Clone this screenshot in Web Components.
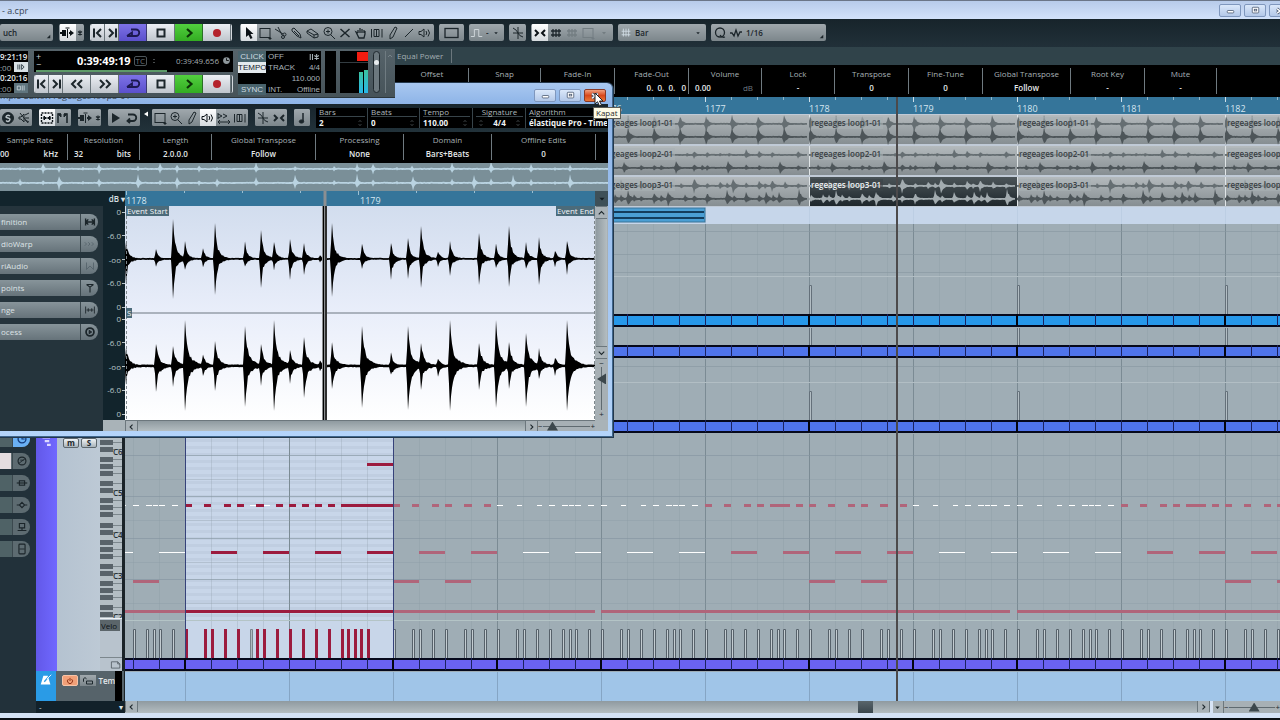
<!DOCTYPE html>
<html lang="en">
<head>
<meta charset="utf-8">
<meta name="viewport" content="width=device-width, initial-scale=1">
<title>a.cpr</title>
<style>
  html, body { margin: 0; height: 100%; }
  body {
    font: 8px/12px "Open Sans", "Noto Sans", sans-serif;
    color: #c9d2d6;
    background: #0c1418;
    overflow: hidden;
  }
</style>
</head>
<body>
<project-window></project-window>

<script>
/* Icons on a 16 x 16 grid, drawn with currentColor */
const ICONS = {
  prev: '<path d="M4 3.500v9M11 4L7 8l4 4" stroke-width="2"/>',
  next: '<path d="M12 3.500v9M5 4l4 4-4 4" stroke-width="2"/>',
  rew: '<path d="M7 4L3 8l4 4M13 4L9 8l4 4" stroke-width="2"/>',
  fwd: '<path d="M3 4l4 4-4 4M9 4l4 4-4 4" stroke-width="2"/>',
  cycle: '<path d="M6 4.500h5a3.200 3.200 0 0 1 0 6.500H2M2 11l5-3.500V11" stroke-width="1.800"/>',
  stop: '<path d="M4.500 4.500h7v7h-7z" stroke-width="2"/>',
  play: '<path d="M6 4l4.500 4L6 12" stroke-width="2.200"/>',
  rec: '<circle cx="8" cy="8" r="4" fill="#b4232c" stroke="none"/>',
  follow: '<path d="M0 8h5M9 8h3" stroke-width="2"/><path d="M2 5h4v6H2zM10 5l4 3-4 3z" fill="currentColor" stroke="none"/><path d="M7.500 4v9M5.500 3h4"/>',
  star: '<path d="M8 5.500v5M6 6.500l4 3M10 6.500l-4 3" stroke-width="1.200"/>',
  arrow: '<path d="M5 2v10l2.500-2 2 4 2-1-2-4h3z" fill="currentColor" stroke="none"/>',
  range: '<rect x="3" y="3.500" width="10" height="9"/><path d="M12 13h2v1h-2z" fill="currentColor"/>',
  split: '<path d="M2 4l8 5M5 2l4 8"/><circle cx="11.500" cy="9.500" r="1.500"/><circle cx="10" cy="12" r="1.500"/>',
  glue: '<path d="M3 4l2-1 6 6 1 4-4-2-5-5z"/><path d="M5 6l5 5"/>',
  erase: '<path d="M2 6l4-2 7 5v3l-4 1-7-5z"/><path d="M2 6l7 4 4-1M9 10v3"/>',
  zoom: '<circle cx="7" cy="6.500" r="4"/><path d="M5 6.500h4M7 4.500v4M10 10l4 4"/>',
  mute: '<path d="M3.500 4l9 8M12.500 4l-9 8" stroke-width="1.500"/>',
  hand: '<path d="M5 8V5M7 8V3M9 8V4M11 8V5M5 8L3 7l3 6h5l1-4V6" stroke-width="1.300"/>',
  warp: '<path d="M2.500 4v8.500M13 4v8.500M5 4.500h5v7H5zM7.500 4v8"/>',
  draw: '<path d="M5 10l5-8 2 1-4 9-3 2z"/>',
  line: '<path d="M4 12l8-8"/>',
  speaker: '<path d="M2 6.500h2L7 4v8L4 9.500H2zM9 6q1.500 2 0 4M11 4.500q3 3.500 0 7"/>',
  box: '<rect x="1" y="3.500" width="13" height="9" stroke-width="1.300"/>',
  step: '<path d="M1 12h4V4h5v8h4" stroke="#d6dde0"/>',
  xfade: '<path d="M3 3q4 2 5 5t5 4M3 8h10M8 2v12"/>',
  snap: '<path d="M3 5l3 3-3 3M13 5l-3 3 3 3M5 8h1M10 8h1" stroke-width="2"/>',
  grid: '<path d="M5 4v8M8 4v8M11 4v8M3 6h10M3 10h10" stroke-width="1.300"/>',
  gridlight: '<path d="M5 3v9M8 3v9M11 3v9M3 6h10M3 10h10" stroke="#d0dbe4"/>',
  down: '<path d="M6 7h4l-2 2.500z" fill="currentColor" stroke="none"/>',
  corner: '<path d="M10 14h4v-4z" fill="currentColor" stroke="none"/>',
  quant: '<circle cx="8" cy="7.500" r="4.500" stroke-width="1.300"/><path d="M8 10q2 3 5 2" stroke-width="1.300"/>',
  zigzag: '<path d="M2 8h2l2 3 2-6 2 6 2-4h2" stroke-width="1.300"/>',
  solo: '<circle cx="8" cy="8" r="5.500" fill="currentColor"/><path d="M10 6q-2-1.500-3.500 0t1.500 2 1.500 2.500-3.500 0" stroke="#b9c2c7" stroke-width="1.400"/>',
  nospeak: '<path d="M3 7h2l3-3v8L5 9H3zM9 5l4-2M9 8h4M9 10l4 2M4 3l8 10"/>',
  selrange: '<rect x="2.500" y="3" width="11" height="10" stroke-dasharray="2 1" stroke-width="1.400"/><path d="M5 6v4l2-2zM11 6v4L9 8zM4 8h8" fill="currentColor"/>',
  flags: '<path d="M3 13V4h3M12 13V4H9" stroke-width="1.600"/><path d="M3 4h3v3zM12 4H9v3z" fill="currentColor"/>',
  tri: '<path d="M4 3l8 5-8 5z" fill="currentColor" stroke="none"/>',
  loop: '<path d="M4 4.500h5a3.200 3.200 0 0 1 0 6.500H4M6 8.500L3.500 11 6 13" stroke-width="1.800"/>',
  scrub: '<path d="M2 3v6M2 4l4 2-4 2M7 4l4 2-4 2M2 12h12M4 10l-2 2 2 2M12 10l2 2-2 2"/>',
  note: '<path d="M9 3v8" stroke-width="1.500"/><ellipse cx="7.500" cy="11.500" rx="2.200" ry="1.600" fill="currentColor"/>',
  definition: '<path d="M3 4v8M13 4v8M3 8h10M6 5L3.500 8 6 11M10 5l2.500 3L10 11" stroke-width="1.600"/>',
  chevs: '<path d="M2 6l2 2-2 2M6 6l2 2-2 2M10 6l2 2-2 2"/>',
  vari: '<path d="M4 4v8l4-4 4 4V4"/>',
  hitp: '<path d="M4 4l4 3 4-3M4 4h8M8 7v6" stroke-width="1.300"/>',
  ranges: '<path d="M3 4v8M13 4v8M4 8h8M6 6v4M10 6v4"/>',
  process: '<circle cx="8" cy="8" r="4.500" stroke-width="2"/><path d="M7 6l3 2-3 2z" fill="currentColor"/>',
  eq: '<circle cx="8" cy="8" r="4.500" stroke-width="1.300"/><path d="M4 11l8-6M6 7h4"/>',
  inserts: '<path d="M2 8h12" stroke-width="1.300"/><rect x="5" y="5.500" width="6" height="5" stroke-width="1.300"/>',
  sends: '<path d="M2 8h3M11 8h3M8 5l3 3-3 3-3-3z" stroke-width="1.300"/>',
  fader: '<path d="M5 4h6v5H5zM3 12h10M8 9v3" stroke-width="1.300"/>',
  strip: '<rect x="4.500" y="2.500" width="7" height="11" rx="1" stroke-width="1.300"/><path d="M5 8h6"/>',
  dial: '<circle cx="8" cy="8" r="4.500" stroke-width="1.500"/><path d="M8 5v3h3" stroke-width="1.300"/>',
  min: '<rect x="4" y="8" width="8" height="3" rx="1" fill="#fff"/>',
  max: '<rect x="4" y="4" width="8" height="7" rx="1" fill="#fff"/><rect x="6.500" y="6.500" width="3" height="2"/>',
  close: '<path d="M4 5l8 6M12 5l-8 6" stroke-width="4"/><path d="M4 5l8 6M12 5l-8 6" stroke="#fff" stroke-width="2"/>',
  left: '<path d="M9.500 4.500L6 8l3.500 3.500" stroke-width="1.600"/>',
  right: '<path d="M6.500 4.500L10 8l-3.500 3.500" stroke-width="1.600"/>',
  up: '<path d="M4 10l4-4 4 4" stroke-width="1.600"/>',
  dn: '<path d="M4 6l4 4 4-4" stroke-width="1.600"/>',
  drop: '<path d="M4 6h8l-4 4.500z" fill="currentColor" stroke="none"/>',
  back: '<path d="M12 3v10L4 8z" fill="currentColor" stroke="none"/>',
  spin: '<path d="M6 6l2-2 2 2M6 10l2 2 2-2"/>',
  clock: '<circle cx="8" cy="8" r="6" fill="currentColor" stroke="none"/><path d="M8 4v4h4" stroke="#000" stroke-width="1.500"/>',
  power: '<path d="M5.500 5a4 4 0 1 0 5 0M8 3v5" stroke-width="1.500"/>',
  unlock: '<path d="M2 9V5q2-3 4 0M6 8h8v4H6z" stroke-width="1.300"/>',
  metro: '<path d="M5 3h5l3 10H2z" fill="#fff" stroke="none"/><path d="M6 10L13 2" stroke="#2a9be6" stroke-width="1.500"/><path d="M9 7l5-5" stroke="#fff"/>',
  punchin: '<path d="M3 4v8M6 4v8M9 4l4 4-4 4z" stroke-width="1.300"/>',
  punchout: '<path d="M2 5h5v6H2zM10 4v8M13 4v8" stroke-width="1.300"/>',
  count: '<path d="M3 4v8M6 4v8M11.500 4v8M8.500 6l6 4M14.500 6l-6 4" stroke-width="1.400"/>',
  lane: '<path d="M2 3h10M5 8h6M8 13h5" stroke="#dcd9ff" stroke-width="3"/>',
  page: '<path d="M2 4h9l3 3v6H2zM11 4v3h3"/>'
};

const icon = (name, size = 14) =>
  `<svg width="${size}" height="${size}" viewBox="0 0 16 16" fill="none" stroke="currentColor" aria-hidden="true">${ICONS[name] || ''}</svg>`;

/* Timeline scale: the lanes run from two beats before FIRST_BAR to the window's edge */
const BAR = 104;
const BEAT = 26;
const FIRST_BAR = 1172;
const LAST_BAR = FIRST_BAR + Math.ceil((window.innerWidth - 185) / BAR);
const FIRST_EVENT = 1176;
const barX = n => 60 + (n - FIRST_BAR) * BAR;

/* Closed outline of a wave: hits are [x, up, down] with a short attack and a tail */
function wavePath(hits, width, mid, spike, body, floor) {
  const top = [];
  const low = [];
  let seed = 7;
  for (let x = 0; x <= width; x++) {
    let up = floor;
    let down = floor;
    for (const [hx, u, d = u] of hits) {
      const dist = x - hx;
      if (dist < -1) continue;
      const env = dist < 0 ? .4 : .66 * Math.exp(-dist / spike) + .34 * Math.exp(-dist / body);
      up = Math.max(up, u * env);
      down = Math.max(down, d * env);
    }
    seed = (seed * 1103515245 + 12345) % 2147483648;
    const jitter = .8 + .4 * seed / 2147483648;
    top.push(`${x},${(mid - up * (up > 15 ? 1 : jitter)).toFixed(1)}`);
    low.unshift(`${x},${(mid + down * (down > 15 ? 1 : 1.8 - jitter)).toFixed(1)}`);
  }
  return `M${top.join('L')}L${low.join('L')}Z`;
}

class UiElement extends HTMLElement {
  connectedCallback() {
    if (this.shadowRoot) return;
    const root = this.attachShadow({ mode: 'open' });
    root.innerHTML = `<style>${this.css()}</style>${this.html()}`;
  }
  attr(name, fallback = '') { return this.getAttribute(name) ?? fallback; }
}

/* Push button with an icon; the tone sets its colours */
class ToolButton extends UiElement {
  css() {
    const w = this.attr('w', '16');
    return `
      :host { display: flex; width: ${w}px; color: #1c262b; }
      button {
        all: unset; box-sizing: border-box; flex: 1; min-width: 0;
        display: flex; align-items: center; justify-content: center;
        background: linear-gradient(#a0a8ad, #7c868b);
        overflow: hidden; white-space: nowrap;
      }
      svg { flex: none; }
      :host([tone=white]) button { background: linear-gradient(#fff, #d5dade); color: #0c1216; }
      :host([tone=light]) button { background: linear-gradient(#eceff4, #bfc5cc); border-right: 1px solid #69747a; }
      :host([tone=violet]) button { background: linear-gradient(#7d72e6, #5b50cc); color: #1c1850; border-right: 1px solid #3c3a70; }
      :host([tone=green]) button { background: linear-gradient(#52cf3f, #33ac22); color: #0c3407; border-right: 1px solid #2a6f25; }
      :host([tone=dim]) button { color: #737d82; }
      :host([tone=orange]) button { background: #f2a078; color: #8c2d10; border: 1px solid #f7c4a8; border-radius: 2px; }
      :host([tone=key]) button { background: linear-gradient(#f1f4f6, #a9b3ba); border: 1px solid #5d676d; border-radius: 2px; font-weight: 700; }
    `;
  }
  html() {
    return `<button type="button" aria-label="${this.attr('label')}">${this.hasAttribute('icon') ? icon(this.attr('icon'), this.attr('size', '16')) : ''}<slot></slot></button>`;
  }
}
customElements.define('tool-button', ToolButton);

class ToolGroup extends UiElement {
  css() {
    return `
      :host {
        display: flex; flex: none; box-sizing: border-box; height: 17px; padding: 0 1px;
        border-radius: 2px; overflow: hidden;
        background: linear-gradient(#a0a8ad, #7c868b);
      }
    `;
  }
  html() { return '<slot></slot>'; }
}
customElements.define('tool-group', ToolGroup);

/* Drop-down in the toolbar */
class ToolSelect extends UiElement {
  css() {
    return `
      :host { display: flex; align-items: center; width: ${this.attr('w')}px; color: #1c262b; }
      select { all: unset; flex: 1; min-width: 0; font-weight: 600; color: #1c262b; padding-left: 2px; }
    `;
  }
  html() {
    return `${this.hasAttribute('icon') ? icon(this.attr('icon'), 14) : ''}
      <select aria-label="${this.attr('label')}"><option>${this.attr('value')}</option></select>
      ${icon(this.attr('mark', 'down'), 14)}`;
  }
}
customElements.define('tool-select', ToolSelect);

/* Rewind, cycle, stop, play and record keys */
class TransportKeys extends UiElement {
  css() {
    return `
      :host { display: flex; flex: none; border-radius: 2px; overflow: hidden; height: ${this.attr('h', '17')}px; border: 0 solid #d4d9de; border-width: 0 1px; }
      tool-button { height: 100%; }
    `;
  }
  html() {
    const seek = this.hasAttribute('seek')
      ? '<tool-button w="28" tone="light" icon="rew" label="Rewind"></tool-button><tool-button w="28" tone="light" icon="fwd" label="Forward"></tool-button>' : '';
    return `
      <tool-button w="14" tone="light" icon="prev" label="Previous marker"></tool-button>
      <tool-button w="14" tone="light" icon="next" label="Next marker"></tool-button>
      ${seek}
      <tool-button w="28" tone="violet" icon="cycle" label="Cycle"></tool-button>
      <tool-button w="28" tone="light" icon="stop" label="Stop"></tool-button>
      <tool-button w="28" tone="green" icon="play" label="Start"></tool-button>
      <tool-button w="28" tone="light" icon="rec" label="Record"></tool-button>
    `;
  }
}
customElements.define('transport-keys', TransportKeys);

/* Window caption with minimise, maximise and close */
class CaptionBar extends UiElement {
  css() {
    return `
      :host { display: flex; align-items: center; justify-content: space-between; color: #3a4656; }
      .buttons { display: flex; gap: 3px; }
      button {
        all: unset; box-sizing: border-box; width: 22px; height: 13px; border-radius: 2px;
        border: 1px solid #7f97bd; color: #4c5b73;
        background: linear-gradient(#dbe8fa, #b3c8e8);
        display: flex; align-items: center; justify-content: center;
      }
      :host([hot]) .close { background: linear-gradient(#f0a080, #d8481c 50%, #e87838); border-color: #8a3a28; }
    `;
  }
  html() {
    return `<span><slot></slot></span>
      <div class="buttons">
        <button type="button" aria-label="Minimise">${icon('min', 13)}</button>
        <button type="button" aria-label="Maximise">${icon('max', 13)}</button>
        <button type="button" class="close" aria-label="Close">${icon('close', 12)}</button>
      </div>`;
  }
}
customElements.define('caption-bar', CaptionBar);

/* One column of an info line */
class InfoCell extends UiElement {
  css() {
    return `
      :host {
        display: flex; flex-direction: column; flex: none; box-sizing: border-box;
        width: ${this.attr('w', '73')}px; height: 26px; gap: 2px;
        border-right: 1px solid #6f7a80; padding: 0 6px;
        text-align: center; color: #a7b0b5; white-space: nowrap;
      }
      .value { display: flex; justify-content: center; font-weight: 600; color: #e4e8ea; }
      :host([align=right]) .value { justify-content: flex-end; margin-right: -4px; }
      :host([unit]) .value { justify-content: space-between; }
      .unit { font-weight: ${this.hasAttribute('dim') ? 400 : 600}; color: ${this.hasAttribute('dim') ? '#6f7a80' : 'inherit'}; padding-right: 2px; }
    `;
  }
  html() {
    return `<div><slot></slot></div>
      <div class="value"><span>${this.attr('value')}</span>${this.hasAttribute('unit') ? `<span class="unit">${this.attr('unit')}</span>` : ''}</div>`;
  }
}
customElements.define('info-cell', InfoCell);

/* Inspector section tab */
class SideTab extends UiElement {
  css() {
    return `
      :host { display: block; height: 16px; width: 100%; }
      button {
        all: unset; box-sizing: border-box; width: 100%; height: 16px;
        display: flex; align-items: center; justify-content: space-between;
        padding-left: 1px; border-radius: 0 8px 8px 0; color: #dde3e6;
        background: linear-gradient(#87949a, #66737a);
      }
      .mark { display: flex; width: 17px; height: 16px; align-items: center; justify-content: center; border-left: 1px solid #3b484e; color: #1b252a; border-radius: 0 8px 8px 0; }
      :host([off]) .mark { color: #56646b; }
      :host([dark]) button { background: linear-gradient(90deg, #4f6266 45%, #5d6b71 45%); }
      :host([dark][on]) .mark { background: #6ab0f4; color: #123a7c; }
      :host([dark][open]) button { background: linear-gradient(90deg, #e4dcdf 38%, #5d6b71 38%); }
    `;
  }
  html() {
    return `<button type="button" aria-label="${this.attr('label')}"><span><slot></slot></span><span class="mark">${icon(this.attr('icon'), 14)}</span></button>`;
  }
}
customElements.define('side-tab', SideTab);

/* Zoom slider with a triangle handle */
class ZoomSlider extends UiElement {
  css() {
    const v = this.hasAttribute('vertical');
    return `
      :host { display: flex; flex: none; flex-direction: ${v ? 'column' : 'row'}; align-items: center; justify-content: space-between; color: #20292e; background: #a7b0b5; line-height: 8px; overflow: hidden; }
      input {
        appearance: none; margin: 0; flex: 1; min-width: 0; min-height: 0; width: ${v ? '11px' : 'auto'}; height: ${v ? 'auto' : '11px'};
        ${v ? 'writing-mode: vertical-lr;' : ''}
        background: linear-gradient(#5f6a70, #5f6a70) center / ${v ? '1px 100%' : '100% 1px'} no-repeat;
      }
      input::-webkit-slider-thumb {
        appearance: none; width: ${v ? 9 : 11}px; height: ${v ? 11 : 9}px; background: #3c474c;
        clip-path: polygon(${v ? '0 50%, 100% 0, 100% 100%' : '50% 0, 100% 100%, 0 100%'});
      }
    `;
  }
  html() {
    return `<span>−</span><input type="range" aria-label="${this.attr('label')}" min="0" max="100" value="${this.attr('value')}"><span>+</span>`;
  }
}
customElements.define('zoom-slider', ZoomSlider);

class TimeRuler extends UiElement {
  css() {
    return `
      :host { display: block; height: 17px; background: #35759a; }
      svg { display: block; width: 100%; height: 100%; }
      text { fill: #d5e6f0; font-size: 9px; }
    `;
  }
  html() {
    let s = '';
    for (let n = FIRST_EVENT; n < LAST_BAR; n++) {
      const x = barX(n);
      s += `<path d="M${x}.5 0v5" stroke="#cfe0ea"/><text x="${x}" y="15">${n}</text>`;
      for (let b = 1; b < 4; b++) s += `<path d="M${x + b * BEAT}.5 0v3" stroke="#8fb6cb"/>`;
    }
    return `<svg>${s}</svg>`;
  }
}
customElements.define('time-ruler', TimeRuler);

const LOOPS = {
  loop1: {
    top: Array.from({ length: 8 }, (_, i) => [i * 26 + 1, 8]),
    low: Array.from({ length: 8 }, (_, i) => [i * 26 + 1, 9])
  },
  loop2: {
    top: [[9, 3], [35, 3], [53, 3], [86, 2], [93, 4], [106, 3], [119, 2], [128, 2], [145, 5], [158, 4], [171, 3], [197, 4]],
    low: [[9, 3], [23, 6], [40, 3], [53, 3], [60, 3], [75, 7], [93, 4], [101, 3], [106, 3], [127, 7], [145, 3], [158, 3], [179, 7], [197, 3]]
  },
  loop3: {
    top: [[20, 6], [40, 5], [80, 3], [93, 8], [106, 3], [119, 4], [126, 3], [132, 8], [145, 3], [158, 5], [164, 3], [171, 6], [184, 4], [197, 3]],
    low: [[2, 4], [14, 5], [20, 4], [27, 8], [33, 4], [40, 3], [53, 6], [60, 4], [67, 8], [84, 4], [93, 4], [106, 6], [126, 8], [133, 4], [145, 6], [158, 4], [165, 7], [172, 4], [178, 6], [198, 9]]
  }
};

/* Lane of repeated two-bar audio events */
class AudioLane extends UiElement {
  css() {
    return `
      :host { display: block; height: 31px; background: #c0cad6; }
      svg { display: block; width: 100%; height: 100%; }
      text { font-weight: 600; fill: #3a4145; }
      text.on { fill: #eef1f3; }
    `;
  }
  html() {
    const loop = LOOPS[this.attr('loop')];
    const selected = Number(this.attr('selected', '0'));
    const top = wavePath(loop.top, 206, 10, 2, 5, 1);
    const low = wavePath(loop.low, 206, 23, 2, 5, 1);
    let s = '';
    for (let n = FIRST_EVENT; n < LAST_BAR; n += 2) {
      const on = n === selected;
      const ink = on ? '#a3acb0' : '#4d5559';
      s += `<g transform="translate(${barX(n)} 0)">
        <rect width="208" height="29" y="1" fill="url(#${on ? 'sel' : 'evt'})"/>
        <path d="M.5 1v29" stroke="#dfe4e6"/>
        <path d="${top}" fill="${on ? ink : '#656e72'}"/><path d="${low}" fill="${ink}"/>
        <rect x="2" y="3" width="72" height="12" fill="${on ? '#3a4347' : '#a9b0b4'}" opacity=".6"/>
        <text class="${on ? 'on' : ''}" x="2" y="12">regeages ${this.attr('loop')}-01</text>
      </g>`;
    }
    return `<svg>
      <defs>
        <linearGradient id="evt" x2="0" y2="1"><stop stop-color="#b4babd"/><stop offset="1" stop-color="#868e92"/></linearGradient>
        <linearGradient id="sel" x2="0" y2="1"><stop stop-color="#4b5458"/><stop offset="1" stop-color="#1e272c"/></linearGradient>
      </defs>${s}</svg>`;
  }
}
customElements.define('audio-lane', AudioLane);

/* Grid lines of the bars and beats */
function gridLines(height) {
  let s = '';
  for (let n = FIRST_BAR - 1; n <= LAST_BAR; n++) {
    const x = barX(n);
    s += `<path d="M${x}.5 0v${height}" stroke="#7b8b94"/>`;
    for (let b = 1; b < 4; b++) s += `<path d="M${x + b * BEAT}.5 0v${height}" stroke="#8796a0" opacity=".25"/>`;
  }
  return s;
}

/* Coloured strip that closes a MIDI lane */
function partStrip(y, color, starts) {
  let s = `<rect y="${y}" width="100%" height="13" fill="#06091c"/><rect y="${y + 2}" width="100%" height="9" fill="${color}"/>`;
  for (let x = 60 - 2 * BEAT; x < barX(LAST_BAR); x += BEAT) s += `<path d="M${x}.5 ${y}v12" stroke="#1b2260"/>`;
  for (const n of starts) s += `<path d="M${barX(n)} ${y}v12" stroke="#04050f" stroke-width="2"/>`;
  return s;
}

class PartLane extends UiElement {
  css() {
    return `
      :host { display: block; height: ${this.attr('h')}px; background: #9fadb5; }
      svg { display: block; width: 100%; height: 100%; }
    `;
  }
  html() {
    const h = Number(this.attr('h'));
    const y = h - 14;
    const lines = this.attr('lines').split(' ').filter(Boolean);
    let s = gridLines(y);
    for (const l of lines) s += `<path d="M0 ${l}.5h2000" stroke="#8797a0" opacity=".6"/>`;
    if (this.hasAttribute('light')) s += `<path d="M0 ${this.attr('light')}.5h2000" stroke="#b2bec4"/>`;
    const top = Number(this.attr('bar', '0'));
    for (let n = FIRST_BAR; n < LAST_BAR; n += 2)
      s += `<path d="M${barX(n)}.5 ${y}V${top}.5h2V${y}" fill="#b2bdc3" stroke="#64707a"/>`;
    s += partStrip(y, this.attr('color'), [1172, 1174, 1176, 1178, 1180, 1182, 1184]);
    return `<svg>${s}</svg>`;
  }
}
customElements.define('part-lane', PartLane);

/* Piano roll lane with velocities */
const HAT = {
  w: [[0, 6], [20, 5], [40, 5], [52, 6], [65, 6], [72, 5], [78, 6], [91, 6]],
  a: [[0, 7], [19, 7], [39, 7], [52, 7], [71, 8], [91, 7]],
  b: [[0, 7], [19, 7], [39, 7], [52, 7], [65, 20], [91, 7]]
};
const VELO = {
  w: [0, 19, 26, 39, 52, 65, 72, 78, 91],
  a: [0, 19, 26, 39, 52, 71, 78, 91],
  b: [0, 19, 26, 39, 52, 65, 72, 78, 91]
};
const BARS = { 1171: 'w', 1174: 'a', 1175: 'w', 1176: 'w', 1177: 'b', 1178: 'a', 1179: 'w', 1180: 'w', 1181: 'b', 1182: 'a', 1183: 'w', 1184: 'w', 1185: 'b' };

class NoteLane extends UiElement {
  css() {
    return `
      :host { display: block; height: 238px; background: #9fadb5; }
      svg { display: block; width: 100%; height: 100%; }
    `;
  }
  html() {
    const faded = '#b0657a';
    const red = '#9c1b3e';
    const note = (x, y, w, c) => `<rect x="${x}" y="${y}" width="${w}" height="3" fill="${c}"/>`;
    let s = `<rect x="60" width="208" height="224" fill="#c8d6e9"/>`;
    for (let y = 5; y < 184; y += 7) s += `<rect x="60" y="${y}" width="208" height="3" fill="#c0cee1"/>`;
    s += gridLines(224);
    for (const y of [21, 62, 104, 145]) s += `<path d="M0 ${y}.5h2000" stroke="#8494a0" opacity=".6"/>`;
    for (const y of [45, 86, 128, 169]) s += `<path d="M0 ${y}.5h2000" stroke="#8a9aa4" opacity=".35"/>`;
    s += '<path d="M0 186.500h2000" stroke="#b4c4c6"/>';

    for (const [n, kind] of Object.entries(BARS)) {
      const x = barX(Number(n));
      for (const [dx, w] of HAT[kind])
        s += kind === 'w' ? `<rect x="${x + dx}" y="71" width="${w}" height="1" fill="#fff"/>` : note(x + dx, 70, w, faded);
      for (const dx of [26, 78])
        s += kind === 'w' ? `<rect x="${x + dx}" y="118" width="26" height="1" fill="#fff"/>` : note(x + dx, 117, 26, faded);
      if (kind === 'a' || n === '1171')
        for (const dx of [0, 52]) s += note(x + dx, 146, 26, faded);
      for (const dx of VELO[kind])
        s += `<path d="M${x + dx}.5 224V195.500h2V224" fill="#c3ccd1" stroke="#56616a"/>`;
    }

    for (const [x, w] of [[60, 7], [79, 7], [99, 7], [112, 7], [131, 8], [151, 7], [164, 7], [177, 7], [190, 7], [203, 7], [216, 52]])
      s += note(x, 70, w, red);
    s += '<rect x="125" y="71" width="6" height="1" fill="#fff"/><rect x="139" y="71" width="6" height="1" fill="#fff"/>';
    for (const x of [86, 138, 190, 242]) s += note(x, 117, 26, red);
    s += note(242, 29, 26, red);
    s += note(0, 176, 60, faded) + note(60, 176, 208, red) + note(268, 176, 202, faded) + note(476, 176, 409, faded) + note(892, 176, 1000, faded);
    for (const x of [60, 79, 86, 99, 112, 131, 138, 151, 164, 177, 190, 203, 216, 222, 229, 235, 242])
      s += `<rect x="${x}" y="195" width="3" height="29" fill="${red}"/>`;
    s += '<path d="M125.500 224V195.500h2V224" fill="#aeb9c0" stroke="#79848c"/>';
    s += '<path d="M60.500 0v224M268.500 0v224" stroke="#36427a"/>';
    s += partStrip(224, '#6a62f2', [1172, 1174, 1175, 1176, 1178, 1179, 1180, 1182]);
    return `<svg>${s}</svg>`;
  }
}
customElements.define('note-lane', NoteLane);

/* Rows without notes: a plain band with the bar grid */
class PlainLane extends UiElement {
  css() {
    return `
      :host { display: block; height: ${this.attr('h')}px; background: ${this.attr('color')}; }
      svg { display: block; width: 100%; height: 100%; }
    `;
  }
  html() {
    let s = '';
    for (let n = FIRST_BAR; n < LAST_BAR; n++) s += `<path d="M${barX(n)}.5 0v40" stroke="#6f8ca8" opacity="${this.attr('grid', '.55')}"/>`;
    if (this.hasAttribute('clip'))
      s += `<rect y="1" width="580" height="14" fill="#4b9fd4" stroke="#3a7296"/><path d="M0 5h579M0 11h579" stroke="#143d5c" stroke-width="2"/>`;
    return `<svg>${s}</svg>`;
  }
}
customElements.define('plain-lane', PlainLane);

class PianoKeys extends UiElement {
  css() {
    return `
      :host { display: block; width: 24px; }
      svg { display: block; width: 24px; height: 100%; }
      text { font-weight: 600; fill: #2a3338; font-size: 8px; }
    `;
  }
  html() {
    let s = '<rect width="22" height="186" fill="#b4bec4"/><rect x="22" width="2" height="100%" fill="#1a2328"/>';
    for (let o = 0; o < 5; o++) {
      const y = Math.round(o * 41.3);
      for (const k of [7, 14, 24, 31, 38])
        if (y + k < 184) s += `<path d="M13 ${y + k + 2}.5h9" stroke="#7c878d"/><rect x="0" y="${y + k}" width="13" height="5" fill="#59636a"/>`;
      s += `<text x="13" y="${y + 22}">C${6 - o}</text>`;
    }
    s += '<rect y="185" width="22" height="55" fill="#b8c3cd"/><path d="M0 185.500h22" stroke="#eef2f5"/><rect y="187" width="20" height="11" fill="#5b656a"/><text x="1" y="196" style="font-weight:400;fill:#0c1216">Velo</text>';
    s += '<path d="M0 224.500h22" stroke="#7c878d"/><g transform="translate(10 226) scale(.7)" fill="none" stroke="#404b52">' + ICONS.page + '</g>';
    return `<svg>${s}</svg>`;
  }
}
customElements.define('piano-keys', PianoKeys);

/* Scroll bar along the edge of a pane */
class PaneScroll extends UiElement {
  css() {
    const v = this.hasAttribute('vertical');
    return `
      :host { display: flex; flex-direction: ${v ? 'column' : 'row'}; background: linear-gradient(${v ? '90deg, ' : ''}#8f9aa0, #b4bdc1); color: #1c262b; min-height: 0; }
      button { all: unset; flex: none; width: 11px; height: 11px; display: flex; align-items: center; justify-content: center; background: #a9b2b7; border: 0 solid #6c777d; border-width: ${v ? '1px 0' : '0 1px'}; overflow: hidden; }
      .track { flex: 1; }
      .thumb { width: 15px; height: 100%; margin-left: 68%; background: linear-gradient(#59656b, #39464d); }
    `;
  }
  html() {
    const v = this.hasAttribute('vertical');
    return `<button type="button" aria-label="Back">${icon(v ? 'up' : 'left', 12)}</button>
      <div class="track">${this.hasAttribute('thumb') ? '<div class="thumb"></div>' : ''}</div>
      <button type="button" aria-label="Forward">${icon(v ? 'dn' : 'right', 12)}</button>`;
  }
}
customElements.define('pane-scroll', PaneScroll);

/* Floating transport panel */
class TransportPanel extends UiElement {
  css() {
    return `
      :host {
        display: flex; box-sizing: border-box; width: 395px; padding: 2px 0 4px; height: 49px;
        background: linear-gradient(#56636a, #465359); border-bottom: 1px solid #2b363b;
      }
      .locators { width: 28px; margin-right: 6px; background: #000; font-weight: 600; color: #e8ecee; overflow: hidden; }
      .locators div { display: flex; align-items: center; justify-content: space-between; height: 11px; line-height: 11px; }
      .locators .sub { color: #9aa3a7; font-weight: 400; height: 10px; }
      .sub span:last-child { display: flex; background: #d9e2e6; color: #1b2a33; width: 14px; justify-content: center; }
      .sub.off span:last-child { background: #60757e; color: #cfdadf; }
      .center { width: 199px; margin-right: 5px; display: flex; flex-direction: column; gap: 3px; }
      .time { background: #000; height: 21px; display: flex; flex-direction: column; justify-content: space-between; }
      .row { display: flex; align-items: center; height: 19px; padding: 0 2px; color: #8e979b; }
      .pm { width: 8px; line-height: 8px; font-size: 9px; color: #cdd4d8; }
      .big { flex: 1; text-align: right; font-size: 11px; font-weight: 700; color: #fff; }
      .tc { border: 1px solid #4c5559; border-radius: 2px; line-height: 8px; padding: 0 1px; margin: 0 3px; color: #6c767b; }
      .small { width: 61px; text-align: right; padding-right: 3px; color: #a3acb0; }
      .progress { width: 131px; height: 2px; margin-left: 2px; background: #5d9a68; }
      .click { width: 83px; margin-right: 4px; background: #000; font: 8px/11px "Liberation Sans", sans-serif; color: #a9b3b8; }
      .click div { display: flex; height: 11px; padding-right: 1px; }
      .click b { font-weight: 400; width: 28px; text-align: center; background: #49636c; color: #cfdbe0; margin-right: 2px; }
      .click b.on { background: #e4eaee; color: #14212a; }
      .click span:last-child { margin-left: auto; }
      .click svg { display: block; }
      .slot { width: 11px; margin-right: 4px; background: #000; }
      .meter { width: 28px; margin-right: 5px; background: #000; display: flex; flex-direction: column; align-items: flex-end; justify-content: space-between; }
      .clip { width: 11px; height: 9px; margin-top: 1px; background: #f21c10; }
      .bars { display: flex; align-items: flex-end; gap: 1px; flex: 1; width: 100%; justify-content: flex-end; border-top: 1px solid #333c41; margin-top: 1px; }
      .bars i { width: 4px; background: linear-gradient(#3ac2a0, #28b8e8); }
      .fader { box-sizing: border-box; width: 7px; margin-right: 5px; border: 1px solid #1f292e; border-radius: 4px; background: #6c787e; display: flex; justify-content: center; }
      .fader i { width: 5px; height: 5px; margin-top: 8px; border-radius: 3px; background: #e8ecee; }
      .end { flex: 1; border-left: 1px solid #6f7b81; color: #7f8b91; }
    `;
  }
  html() {
    return `
      <div class="locators">
        <div>9:21:19</div>
        <div class="sub"><span>:00</span><span>${icon('punchin', 10)}</span></div>
        <div>0:20:16</div>
        <div class="sub off"><span>:00</span><span>${icon('punchout', 10)}</span></div>
      </div>
      <div class="center">
        <div class="time">
          <div class="row"><span class="pm">+<br>−</span><span class="big">0:39:49:19</span><span class="tc">TC</span>${icon('spin', 8)}<span class="small">0:39:49.656</span>${icon('clock', 9)}</div>
          <div class="progress"></div>
        </div>
        <transport-keys seek h="18"></transport-keys>
      </div>
      <div class="click">
        <div><b>CLICK</b><span>OFF</span><span>${icon('count', 12)}</span></div>
        <div><b class="on">TEMPO</b><span>TRACK</span><span>4/4</span></div>
        <div><span>110.000</span></div>
        <div><b>SYNC</b><span>INT.</span><span>Offline</span></div>
      </div>
      <div class="slot"></div>
      <div class="meter"><div class="clip"></div><div class="bars"><i style="height: 70%"></i><i style="height: 78%"></i></div></div>
      <div class="fader"><i></i></div>
      <div class="end">${icon('up', 8)}</div>
    `;
  }
}
customElements.define('transport-panel', TransportPanel);

/* Labelled value box in the editor toolbar */
class ValueField extends UiElement {
  css() {
    return `
      :host { display: block; box-sizing: border-box; width: ${this.attr('w', '52')}px; padding: 0 2px 0 3px; border-right: 1px solid #38444a; flex: none; overflow: hidden; }
      label { display: block; height: 8px; line-height: 8px; color: #aeb7bb; border-bottom: 1px solid #38444a; }
      .row { display: flex; align-items: center; color: #7a858a; height: 11px; }
      input { all: unset; flex: 1; min-width: 0; font-weight: 700; color: #f2f4f5; text-align: ${this.attr('align', 'left')}; }
    `;
  }
  html() {
    const spin = this.hasAttribute('plain') ? '' : icon('spin', 10);
    return `<label for="v">${this.attr('label')}</label>
      <div class="row">${this.attr('align') === 'center' ? spin : ''}<input id="v" value="${this.attr('value')}">${spin}</div>`;
  }
}
customElements.define('value-field', ValueField);

const SAMPLE_LEFT = [
  [1, 17, 25], [31, 9, 11], [48, 40, 40], [60, 18, 14], [78, 12, 9], [90, 36, 36], [120, 15, 12], [136, 29, 29], [149, 17, 12],
  [165, 20, 21], [179, 16, 16], [195, 4, 4], [207, 36, 38], [237, 15, 13], [266, 16, 21], [283, 21, 20], [296, 33, 29], [313, 9, 8],
  [325, 18, 17], [354, 26, 26], [371, 15, 12], [384, 33, 28], [401, 17, 12], [414, 22, 26], [430, 9, 9], [442, 18, 16]
];
const SAMPLE_RIGHT = [
  [1, 18, 19], [31, 22, 26], [48, 20, 21], [60, 46, 45], [78, 13, 11], [90, 25, 25], [120, 40, 41], [136, 22, 20], [149, 46, 45],
  [165, 16, 18], [179, 29, 32], [195, 6, 6], [207, 24, 23], [237, 40, 42], [266, 12, 13], [283, 40, 44], [296, 23, 24], [313, 9, 11],
  [325, 46, 45], [354, 23, 24], [371, 46, 42], [384, 24, 23], [401, 33, 41], [414, 18, 13], [430, 9, 11], [442, 46, 45]
];
const OVER_LEFT = [[20, 2], [43, 6], [59, 4], [83, 2], [99, 6], [138, 3], [160, 6], [177, 5], [199, 4], [217, 2], [256, 6], [295, 3], [334, 3], [357, 5], [373, 6], [397, 2], [412, 4], [452, 6], [491, 7], [531, 5], [555, 2], [570, 4]];
const OVER_RIGHT = [[20, 4], [43, 3], [59, 8], [83, 2], [99, 5], [138, 8], [160, 3], [177, 7], [199, 3], [217, 5], [256, 5], [295, 8], [334, 3], [357, 8], [373, 4], [397, 2], [413, 8], [452, 4], [474, 8], [491, 4], [513, 7], [531, 4], [555, 2], [570, 8]];

/* Sample editor window */
class SampleEditor extends UiElement {
  css() {
    return `
      :host {
        display: block; box-sizing: border-box; width: 613px; padding: 0 5px 6px 0;
        background: linear-gradient(#a9c8f0, #8fb5e8 20px, #b4d4fa);
        border-radius: 0 6px 0 0; box-shadow: inset -1px -1px #3f668c, 0 0 0 1px #24384c;
      }
      caption-bar { height: 21px; padding-right: 2px; padding-top: 4px; box-sizing: border-box; font-size: 9px; }
      .tools { display: flex; box-sizing: border-box; height: 28px; padding-top: 5px; background: linear-gradient(#18252c, #22323a); }
      tool-group { margin-right: 7px; padding: 0; }
      tool-group:last-of-type { margin-right: 6px; }
      .back { width: 10px; margin-left: -5px; color: #fff; }
      .fields { display: flex; flex: 1; height: 20px; margin-top: -1px; background: #000; overflow: hidden; }
      .info { display: flex; box-sizing: border-box; height: 31px; padding-top: 2px; background: #000; overflow: hidden; }
      .overview { display: block; width: 100%; height: 28px; background: #7a8f98; }
      .body { display: grid; grid-template-columns: 103px 22px 1fr 13px; grid-template-rows: 15px 214px 11px; }
      .dark { background: #12242c; }
      .tabs { grid-area: 2 / 1 / 4; display: flex; flex-direction: column; gap: 6px; padding: 8px 5px 0 0; background: #25343c; }
      .db { color: #d8e0e4; text-align: right; font-weight: 600; line-height: 15px; }
      .scale { grid-area: 2 / 2; display: flex; flex-direction: column; background: #12242c; color: #b9c4c9; }
      .scale div { height: 107px; display: flex; flex-direction: column; justify-content: space-between; }
      .scale span { display: flex; justify-content: flex-end; align-items: center; gap: 1px; }
      .scale span::after { content: ""; width: 3px; height: 1px; background: #b9c4c9; }
      .ruler { background: #35759a; }
      .ruler svg, .wave svg { display: block; width: 100%; height: 100%; }
      .ruler text { fill: #d5e6f0; font-size: 9px; }
      .wave { grid-area: 2 / 3; position: relative; background: linear-gradient(#d2ddee, #e9eefa 50%, #fff); }
      .tag { position: absolute; background: #4c6b7a; color: #f2f6f8; line-height: 10px; padding: 0 1px; white-space: nowrap; }
      .side { grid-area: 2 / 4; display: flex; flex-direction: column; background: #a7b0b5; padding: 0 1px; }
      pane-scroll[vertical] { height: 153px; }
      zoom-slider[vertical] { height: 59px; }
      .corner { background: #a9b3b8; }
      .bottom { grid-area: 3 / 3; display: flex; border-top: 1px solid #6c777d; box-sizing: border-box; overflow: hidden; }
      .bottom pane-scroll { flex: 1; }
      .bottom zoom-slider { width: 57px; }
      .drop { background: #3e5058; color: #10191e; display: flex; align-items: center; justify-content: center; }
    `;
  }
  html() {
    const ticks = Array.from({ length: 8 }, (_, i) => `<path d="M${i * 58 + 1}.5 0v${i % 4 ? 2 : 4}" stroke="#9cc0d3"/>`).join('');
    const scale = '<div><span>0</span><span>-6.0</span><span>-oo</span><span>-6.0</span><span>0</span></div>';
    return `
      <caption-bar hot>mple Editor: regeages loop3-01</caption-bar>
      <div class="tools">
        <tool-group><tool-button icon="solo" label="Solo"></tool-button><tool-button icon="nospeak" label="Mute"></tool-button></tool-group>
        <tool-group><tool-button tone="white" icon="selrange" label="Show event"></tool-button><tool-button icon="flags" label="Show regions"></tool-button></tool-group>
        <tool-group><tool-button icon="follow" label="Auto-scroll"></tool-button><tool-button w="7" icon="star" label="Scroll options"></tool-button></tool-group>
        <tool-group><tool-button icon="tri" label="Play"></tool-button><tool-button icon="loop" label="Loop"></tool-button></tool-group>
        <span class="back">${icon('back', 8)}</span>
        <tool-group>
          <tool-button icon="range" label="Range"></tool-button><tool-button icon="zoom" label="Zoom"></tool-button>
          <tool-button icon="draw" label="Draw"></tool-button><tool-button tone="white" icon="speaker" label="Audition"></tool-button>
          <tool-button icon="scrub" label="Scrub"></tool-button><tool-button icon="warp" label="Warp"></tool-button>
        </tool-group>
        <tool-group><tool-button icon="xfade" label="Zero crossing"></tool-button><tool-button icon="snap" label="Snap"></tool-button></tool-group>
        <tool-group><tool-button icon="note" label="Musical mode"></tool-button></tool-group>
        <div class="fields">
          <value-field label="Bars" value="2"></value-field>
          <value-field label="Beats" value="0"></value-field>
          <value-field label="Tempo" value="110.00" w="53"></value-field>
          <value-field label="Signature" value="4/4" align="center" w="53"></value-field>
          <value-field label="Algorithm" value="élastique Pro - Time" plain w="84"></value-field>
        </div>
      </div>
      <div class="info">
        <info-cell w="68" value="00" unit="kHz" style="padding: 0 7px 0 0">Sample Rate</info-cell>
        <info-cell w="72" value="32" unit="bits">Resolution</info-cell>
        <info-cell w="72" value="2.0.0.0">Length</info-cell>
        <info-cell w="104" value="Follow">Global Transpose</info-cell>
        <info-cell w="88" value="None">Processing</info-cell>
        <info-cell w="88" value="Bars+Beats">Domain</info-cell>
        <info-cell w="104" value="0">Offline Edits</info-cell>
      </div>
      <svg class="overview"><path d="${wavePath(OVER_LEFT, 608, 6, 1, 3, 1)}${wavePath(OVER_RIGHT, 608, 20, 1, 4, 1)}" fill="#b9d3e1"/></svg>
      <div class="body">
        <div class="dark"></div>
        <div class="dark db">dB ▾</div>
        <div class="ruler"><svg>${ticks}<text x="1" y="13">1178</text><text x="235" y="13">1179</text><path d="M200 0v15" stroke="#8b8f92" stroke-width="3"/></svg></div>
        <div class="drop">${icon('drop', 10)}</div>
        <div class="tabs">
          <side-tab icon="definition">finition</side-tab>
          <side-tab icon="chevs" off>dioWarp</side-tab>
          <side-tab icon="vari" off>riAudio</side-tab>
          <side-tab icon="hitp">points</side-tab>
          <side-tab icon="ranges">nge</side-tab>
          <side-tab icon="process">ocess</side-tab>
        </div>
        <div class="scale">${scale}${scale}</div>
        <div class="wave">
          <svg>
            <path d="M1 107h470" stroke="#6c7780"/>
            <path d="${wavePath(SAMPLE_LEFT, 470, 53, 1.5, 6, 1)}${wavePath(SAMPLE_RIGHT, 470, 160, 1.8, 8, 1.4)}"/>
            <path d="M1.500 0v214M469.500 0v214" stroke="#7d878c" stroke-dasharray="3 2"/>
            <rect x="197" width="5" height="214" fill="#b8bcbe"/><path d="M198.500 0v214M201 0v214" stroke="#000" stroke-width="1.500"/>
          </svg>
          <span class="tag" style="left: 1px; top: 0">Event Start</span>
          <span class="tag" style="right: 0; top: 0">Event End</span>
          <span class="tag" style="left: 1px; top: 102px">S</span>
        </div>
        <div class="side">
          <pane-scroll vertical></pane-scroll>
          <zoom-slider vertical label="Vertical zoom" value="20"></zoom-slider>
        </div>
        <div class="corner" style="grid-area: 3 / 2"></div>
        <div class="bottom">
          <pane-scroll></pane-scroll>
          <zoom-slider label="Horizontal zoom" value="12"></zoom-slider>
        </div>
        <div class="corner" style="grid-area: 3 / 4"></div>
      </div>
    `;
  }
}
customElements.define('sample-editor', SampleEditor);

/* Main window: tool rows, info line, inspector, track list and lanes */
class ProjectWindow extends UiElement {
  css() {
    return `
      :host { display: flex; flex-direction: column; position: relative; height: 100vh; overflow: hidden; background: #22313a; }
      .title { flex: none; height: 19px; box-sizing: border-box; border-top: 1px solid #6b7688; padding: 3px 0 0 2px; overflow: hidden; background: linear-gradient(#b7cbea, #d2e2fa); font-size: 9px; }
      .title caption-bar { margin-right: -11px; }
      .tools { display: flex; flex: none; gap: 5px; box-sizing: border-box; height: 28px; padding-top: 5px; background: linear-gradient(#17242b, #213039); }
      .left { display: flex; gap: 6px; margin-right: 3px; }
      .strip { flex: none; height: 18px; line-height: 18px; padding-left: 397px; background: #30434a; color: #a3aeb3; }
      .strip span { display: inline-block; padding-right: 8px; border-right: 1px solid #6b777d; line-height: 14px; }
      .info { display: flex; flex: none; box-sizing: border-box; height: 32px; padding: 3px 0 0; background: #000; overflow: hidden; }
      .info info-cell:first-child { border: 0; }
      .main { display: grid; grid-template-columns: 36px 88px 1fr; flex: 1; min-height: 0; }
      .inspector { display: flex; flex-direction: column; gap: 6px; padding: 334px 6px 0 0; background: #22313a; }
      .list { display: flex; flex-direction: column; }
      .above { height: 336px; background: #b6c2cc; }
      .track { display: flex; height: 238px; background: linear-gradient(90deg, #b0bfce, #c2cdd8); }
      .color { width: 21px; display: flex; justify-content: center; background: linear-gradient(90deg, #6258e8, #7068ff); }
      .track .color { padding-top: 2px; box-sizing: border-box; }
      .ms { display: flex; flex: 1; gap: 2px; padding: 5px 0 0 6px; height: 10px; }
      .tempo { display: flex; height: 30px; background: #56636a; color: #e4e8ea; }
      .tempo .color { background: #2a9be6; padding-top: 2px; }
      .tempo .mid { flex: 1; display: flex; gap: 2px; padding: 4px 0 0 6px; height: 11px; font-weight: 600; }
      .slab { width: 7px; background: #000; margin-right: 2px; }
      .foot { display: flex; justify-content: space-between; flex: 1; padding: 0 1px 0 3px; background: #12212a; color: #dfe5e8; }
      .lanes { display: flex; flex-direction: column; min-width: 0; position: relative; border-left: 1px solid #1a2328; }
      .lanes > * { flex: none; }
      .playhead { position: absolute; left: 771px; top: 0; width: 2px; height: 604px; background: #4c4a4b; }
      .scroll { display: flex; height: 12px; background: #d7e4f6; overflow: hidden; }
      .scroll pane-scroll { flex: 1; }
      .scroll .menu { flex: none; width: 10px; margin-left: 3px; background: #a7b0b5; color: #1c262b; display: flex; align-items: center; border-right: 1px solid #6c777d; }
      .scroll zoom-slider { width: 56px; }
      .edge { flex: none; height: 7px; box-sizing: border-box; background: #d4e2f5; border-bottom: 2px solid #0a0f14; }
      sample-editor { position: absolute; left: 0; top: 83px; }
      transport-panel { position: absolute; left: 0; top: 49px; }
      .tip { position: absolute; left: 593px; top: 107px; padding: 0 2px; background: #fdfbe6; border: 1px solid #5d5d55; color: #2a2a2a; line-height: 10px; }
      .cursor { position: absolute; left: 594px; top: 92px; }
    `;
  }
  html() {
    const tools = ['range', 'split', 'glue', 'erase', 'zoom', 'mute', 'hand', 'warp', 'draw', 'line', 'speaker'];
    return `
      <div class="title"><caption-bar>- a.cpr</caption-bar></div>
      <div class="tools">
        <div class="left">
          <tool-group><tool-select w="51" label="Automation mode" value="uch" mark="corner"></tool-select></tool-group>
          <tool-group><tool-button tone="white" icon="follow" label="Auto-scroll"></tool-button><tool-button w="7" icon="star" label="Scroll options"></tool-button></tool-group>
          <transport-keys></transport-keys>
        </div>
        <tool-group><tool-button tone="white" icon="arrow" label="Select"></tool-button>${tools.map(t => `<tool-button icon="${t}" label="${t}"></tool-button>`).join('')}</tool-group>
        <tool-group><tool-button w="23" icon="box" label="Colour"></tool-button></tool-group>
        <tool-group><tool-select w="33" icon="step" label="Nudge" value="-"></tool-select></tool-group>
        <tool-group><tool-button w="15" icon="xfade" label="Zero crossing"></tool-button></tool-group>
        <tool-group>
          <tool-button tone="white" icon="snap" label="Snap"></tool-button><tool-button icon="grid" label="Grid"></tool-button>
          <tool-button tone="dim" icon="grid" label="Events"></tool-button><tool-button tone="dim" icon="range" label="Shuffle"></tool-button><tool-button tone="dim" icon="down" label="Snap type"></tool-button>
        </tool-group>
        <tool-group><tool-select w="86" icon="gridlight" label="Grid type" value="Bar"></tool-select></tool-group>
        <tool-group><tool-button icon="quant" label="Quantize"></tool-button><tool-button icon="zigzag" label="Iterative"></tool-button><tool-select w="81" label="Quantize value" value="1/16" mark="corner"></tool-select></tool-group>
      </div>
      <div class="strip"><span>Equal Power</span></div>
      <div class="info">
        <info-cell w="396"></info-cell>
        <info-cell>Offset</info-cell>
        <info-cell w="72">Snap</info-cell>
        <info-cell w="74">Fade-In</info-cell>
        <info-cell w="74" value="0.&nbsp; 0.&nbsp; 0.&nbsp;&nbsp; 0" align="right">Fade-Out</info-cell>
        <info-cell value="0.00" unit="dB" dim>Volume</info-cell>
        <info-cell value="-">Lock</info-cell>
        <info-cell w="74" value="0">Transpose</info-cell>
        <info-cell w="74" value="0">Fine-Tune</info-cell>
        <info-cell w="88" value="Follow">Global Transpose</info-cell>
        <info-cell w="74" value="-">Root Key</info-cell>
        <info-cell w="72" value="-">Mute</info-cell>
      </div>
      <div class="main">
        <div class="inspector">
          <side-tab dark on icon="dial" label="Track"></side-tab>
          <side-tab dark open icon="eq" label="Equalizers"></side-tab>
          <side-tab dark icon="inserts" label="Inserts"></side-tab>
          <side-tab dark icon="sends" label="Sends"></side-tab>
          <side-tab dark icon="fader" label="Fader"></side-tab>
          <side-tab dark icon="strip" label="Channel strip"></side-tab>
        </div>
        <div class="list">
          <div class="above"></div>
          <div class="track">
            <div class="color">${icon('lane', 12)}</div>
            <div class="ms"><tool-button tone="key" label="Mute">m</tool-button><tool-button tone="key" label="Solo">S</tool-button></div>
            <piano-keys></piano-keys>
          </div>
          <div class="tempo">
            <div class="color">${icon('metro', 14)}</div>
            <div class="mid"><tool-button tone="orange" icon="power" size="10" label="Activate tempo track"></tool-button><tool-button icon="unlock" size="12" label="Lock"></tool-button><span>Tem</span></div>
            <div class="slab"></div>
          </div>
          <div class="foot"><span>-</span><span>▾</span></div>
        </div>
        <div class="lanes">
          <time-ruler></time-ruler>
          <audio-lane loop="loop1"></audio-lane>
          <audio-lane loop="loop2"></audio-lane>
          <audio-lane loop="loop3" selected="1178"></audio-lane>
          <plain-lane h="17" color="#c6d6ea" grid="0.1" clip></plain-lane>
          <part-lane h="104" color="#2798ea" lines="7 30 48" light="52" bar="61"></part-lane>
          <part-lane h="31" color="#4f74ec" bar="-2"></part-lane>
          <part-lane h="75" color="#4f74ec" lines="7" light="23" bar="32"></part-lane>
          <note-lane></note-lane>
          <plain-lane h="29" color="#a0c5e8"></plain-lane>
          <div class="scroll">
            <pane-scroll thumb></pane-scroll>
            <span class="menu">${icon('drop', 9)}</span>
            <zoom-slider label="Zoom" value="56"></zoom-slider>
          </div>
          <div class="playhead"></div>
        </div>
      </div>
      <div class="edge"></div>
      <sample-editor></sample-editor>
      <transport-panel></transport-panel>
      <span class="tip" role="tooltip">Kapat</span>
      <svg class="cursor" width="10" height="15" viewBox="0 0 10 15"><path d="M1 1v11l2.500-2.300 2 4.300 2-1-2-4H9z" fill="#fff" stroke="#222"/></svg>
    `;
  }
}
customElements.define('project-window', ProjectWindow);
</script>
</body>
</html>
